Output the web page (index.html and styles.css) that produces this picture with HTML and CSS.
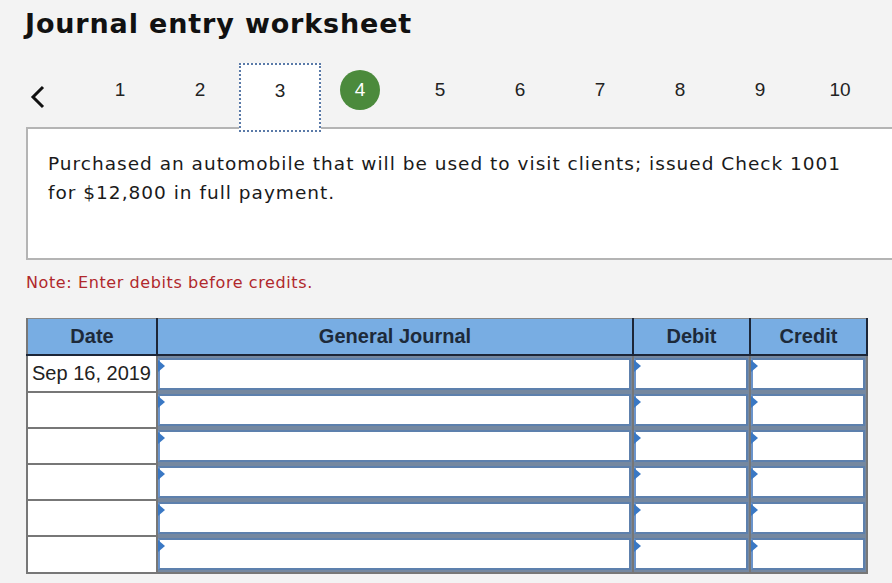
FILE: index.html
```html
<!DOCTYPE html>
<html>
<head>
<meta charset="utf-8">
<link rel="stylesheet" href="styles.css">
</head>
<body>
<h1 class="title">Journal entry worksheet</h1>
<div class="nav">
  <div class="prev"><svg width="16" height="24" viewBox="0 0 16 24"><path d="M13 2 L3 12 L13 22" fill="none" stroke="#111" stroke-width="3"/></svg></div>
  <div class="step">1</div>
  <div class="step">2</div>
  <div class="step current">3</div>
  <div class="step"><span class="done">4</span></div>
  <div class="step">5</div>
  <div class="step">6</div>
  <div class="step">7</div>
  <div class="step">8</div>
  <div class="step">9</div>
  <div class="step">10</div>
</div>
<div class="question">Purchased an automobile that will be used to visit clients; issued Check 1001 for $12,800 in full payment.</div>
<div class="note">Note: Enter debits before credits.</div>
<table class="journal">
  <thead>
    <tr><th class="c-date">Date</th><th class="c-gj">General Journal</th><th class="c-dr">Debit</th><th class="c-cr">Credit</th></tr>
  </thead>
  <tbody>
    <tr><td class="date">Sep 16, 2019</td><td class="in"><div class="box"></div></td><td class="in"><div class="box"></div></td><td class="in"><div class="box"></div></td></tr>
    <tr><td class="date"></td><td class="in"><div class="box"></div></td><td class="in"><div class="box"></div></td><td class="in"><div class="box"></div></td></tr>
    <tr><td class="date"></td><td class="in"><div class="box"></div></td><td class="in"><div class="box"></div></td><td class="in"><div class="box"></div></td></tr>
    <tr><td class="date"></td><td class="in"><div class="box"></div></td><td class="in"><div class="box"></div></td><td class="in"><div class="box"></div></td></tr>
    <tr><td class="date"></td><td class="in"><div class="box"></div></td><td class="in"><div class="box"></div></td><td class="in"><div class="box"></div></td></tr>
    <tr><td class="date"></td><td class="in"><div class="box"></div></td><td class="in"><div class="box"></div></td><td class="in"><div class="box"></div></td></tr>
  </tbody>
</table>
</body>
</html>
```
FILE: styles.css
```css
html, body { margin: 0; padding: 0; }
body {
  background: #f3f3f3;
  width: 892px;
  height: 583px;
  overflow: hidden;
  font-family: "DejaVu Sans", sans-serif;
  color: #111;
}
.title {
  margin: 0;
  padding: 7px 0 0 25px;
  font-family: "DejaVu Sans", sans-serif;
  font-size: 27px;
  letter-spacing: 0.85px;
  font-weight: bold;
  line-height: 34px;
  color: #111;
}
.nav {
  display: flex;
  align-items: stretch;
  height: 69px;
  margin-top: 22px;
  padding-left: 26px;
  position: relative;
  z-index: 2;
}
.prev {
  width: 54px;
  display: flex;
  align-items: center;
  padding-left: 4px;
  box-sizing: border-box;
  padding-bottom: 2px;
}
.step {
  width: 80px;
  display: flex;
  align-items: center;
  justify-content: center;
  font-family: "Liberation Sans", Arial, sans-serif;
  font-size: 19px;
  color: #222;
  padding-bottom: 15px;
  box-sizing: border-box;
}
.step.current {
  width: 82px;
  margin: 0 -1px;
  background: #fff;
  border: 2px dotted #5a7aa8;
  padding-bottom: 13px;
}
.done {
  width: 40px;
  height: 40px;
  border-radius: 50%;
  background: #4b8a3c;
  color: #fff;
  display: flex;
  align-items: center;
  justify-content: center;
}
.question {
  position: relative;
  z-index: 1;
  margin: -5px 0 0 26px;
  width: 880px;
  height: 133px;
  box-sizing: border-box;
  background: #fff;
  border: 2px solid #b4b4b4;
  padding: 20px 30px 0 20px;
  font-family: "DejaVu Sans", sans-serif;
  font-size: 18.5px;
  letter-spacing: 1px;
  line-height: 29px;
  color: #1a1a1a;
}
.note {
  margin: 13px 0 0 26px;
  font-family: "DejaVu Sans", sans-serif;
  font-size: 16px;
  letter-spacing: 0.6px;
  line-height: 20px;
  color: #b0282c;
}
.journal {
  margin: 25px 0 0 26px;
  border-collapse: collapse;
  font-family: "Liberation Sans", Arial, sans-serif;
}
.journal th {
  background: #78ade3;
  height: 36px;
  padding: 0;
  font-size: 20px;
  font-weight: bold;
  color: #1d2a3a;
  border-top: 1px solid #888;
  border-bottom: 2px solid #1c2638;
  border-right: 2px solid #1c2638;
  box-sizing: border-box;
}
.journal th.c-date { border-left: 2px solid #777; }
.c-date { width: 130px; }
.c-gj { width: 476px; }
.c-dr { width: 117px; }
.c-cr { width: 117px; }
.journal td {
  padding: 0;
  height: 36px;
  box-sizing: border-box;
}
.journal td.date {
  background: #fff;
  border: 2px solid #777;
  font-size: 20px;
  color: #222;
  padding-left: 4px;
  white-space: nowrap;
}
.journal td.in {
  border-left: 1px solid #777;
  border-right: 2px solid #777;
  padding: 0 1px 0 0;
  background: #7588a0;
}
.journal tbody tr:last-child td.in { border-bottom: 2px solid #777; }
.box {
  position: relative;
  height: 32px;
  margin: 2px 0 2px 0;
  background: #fff;
  border: 2px solid #5d80ad;
  border-left: 2px solid #6a94cc;
  box-sizing: border-box;
}
.box::before {
  content: "";
  position: absolute;
  left: -2px;
  top: 0;
  border-left: 7px solid #3a78c4;
  border-top: 6px solid transparent;
  border-bottom: 6px solid transparent;
}
```
